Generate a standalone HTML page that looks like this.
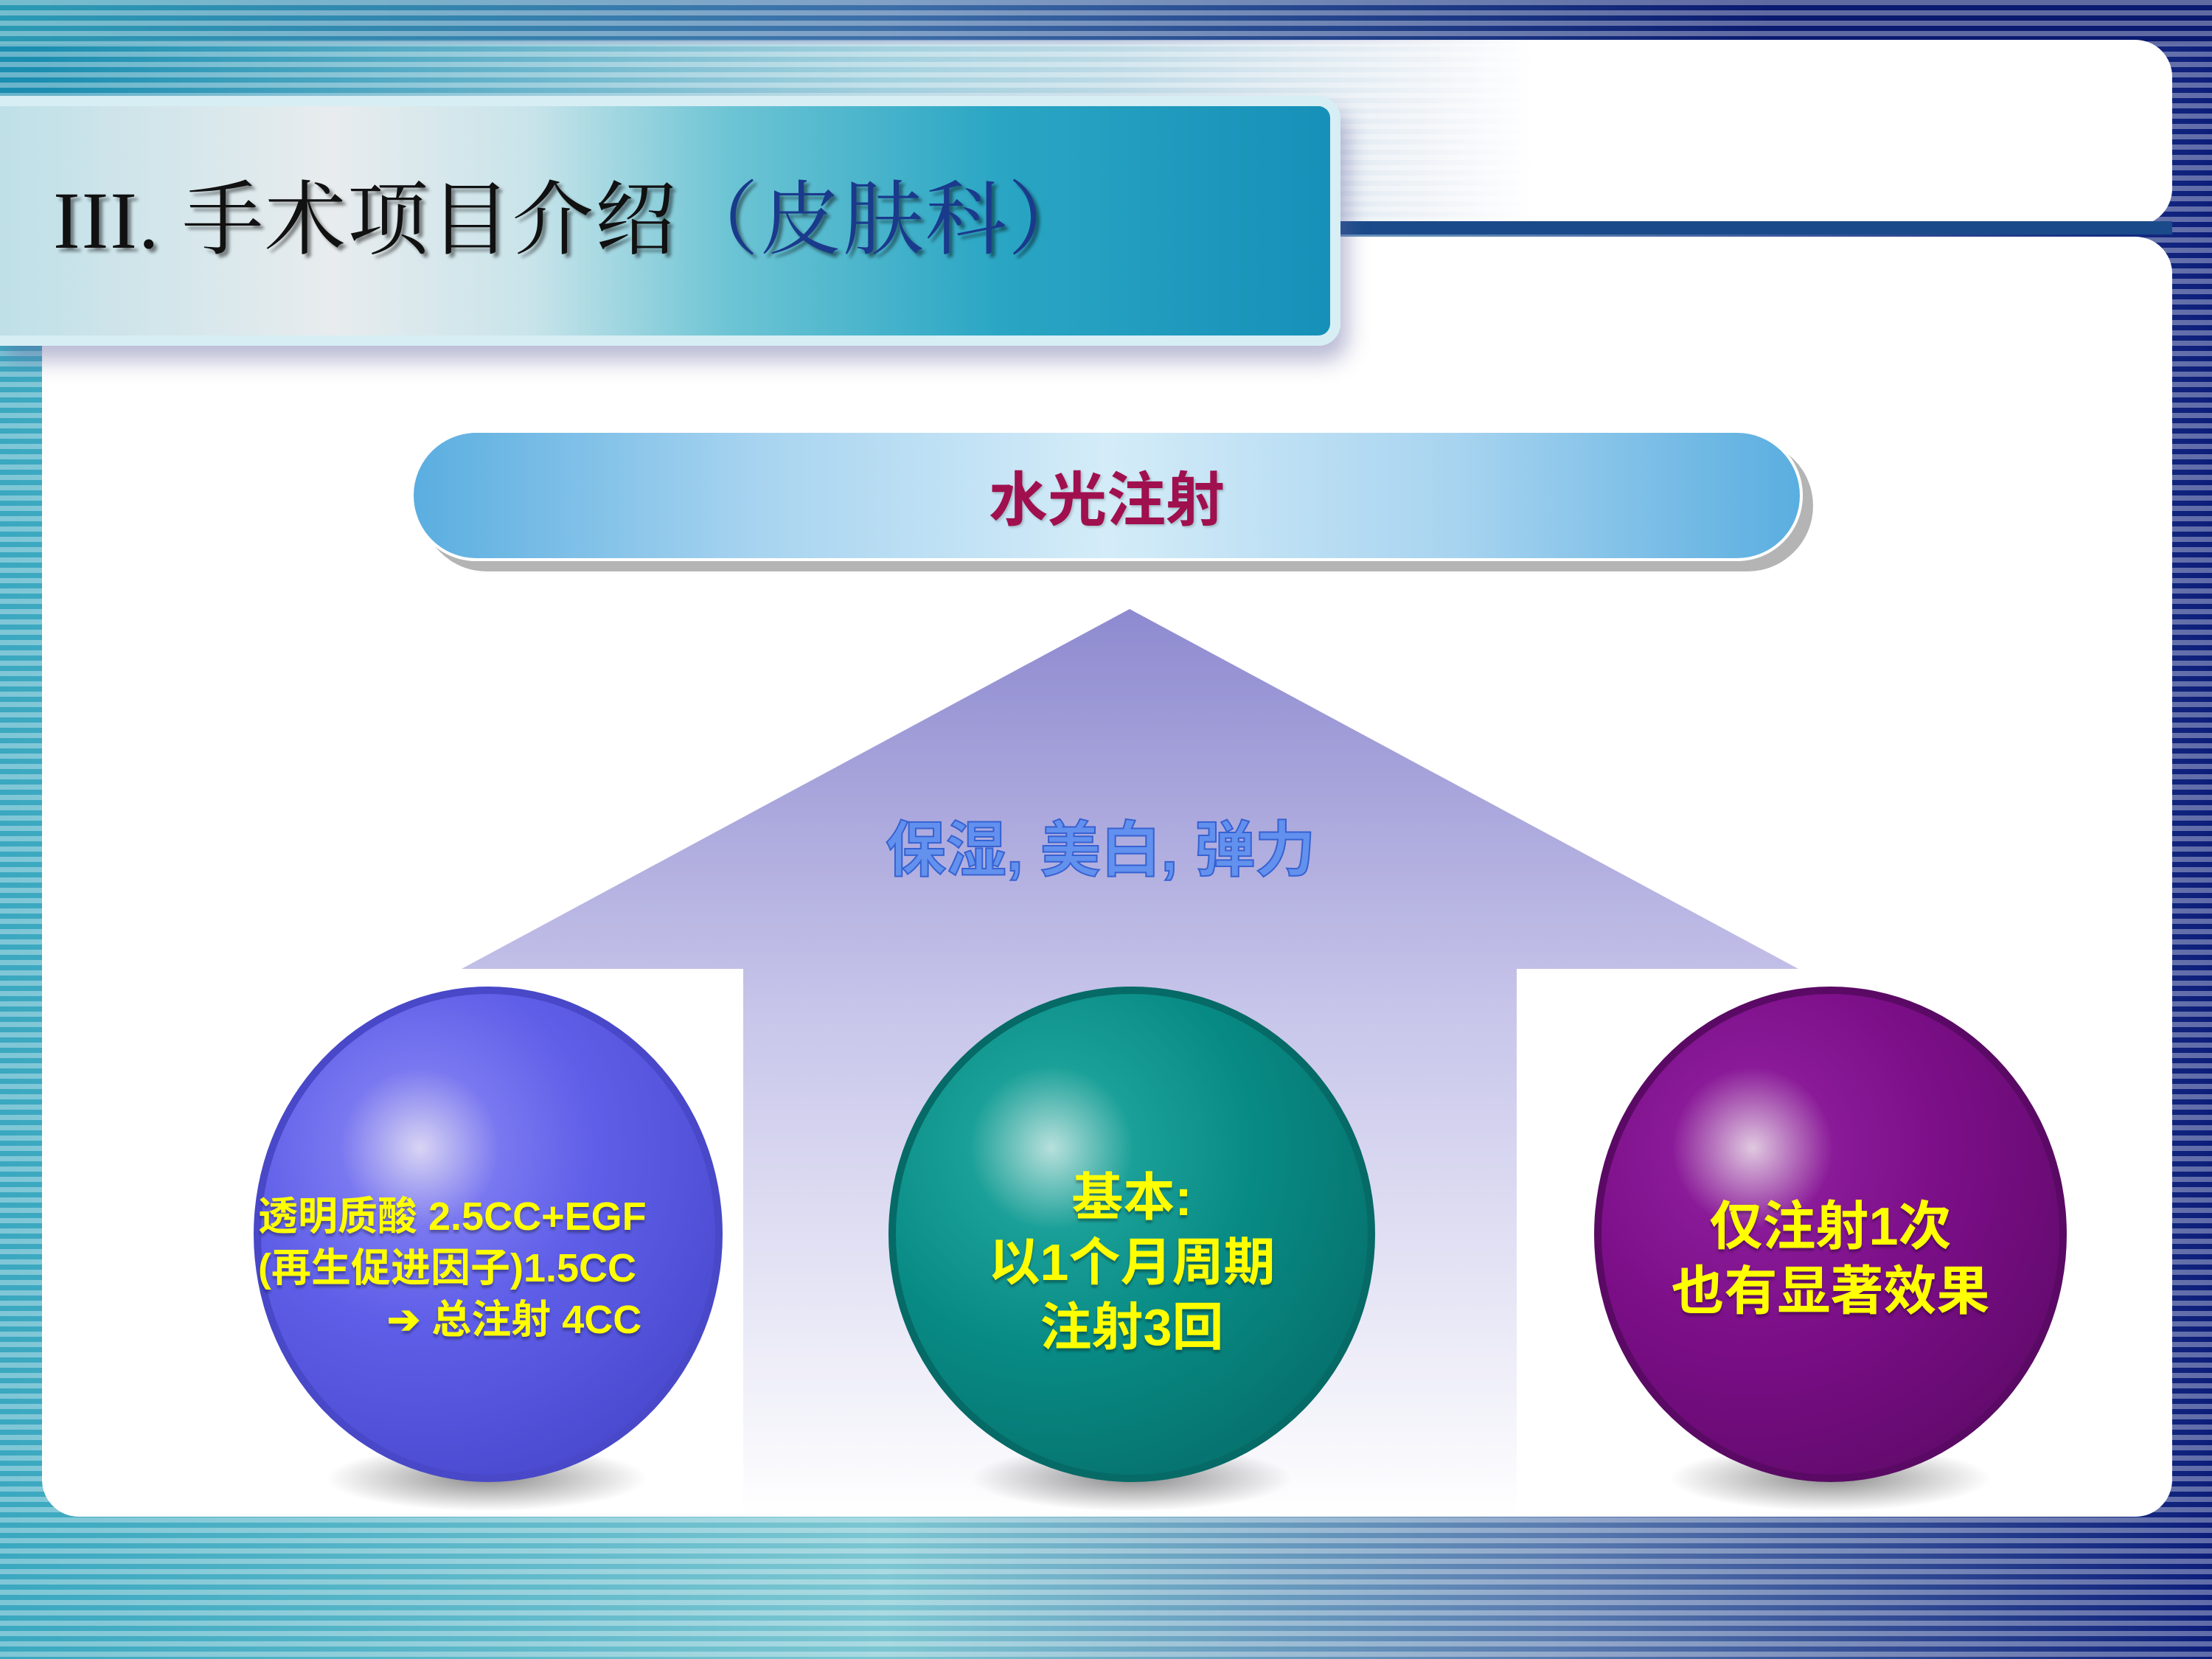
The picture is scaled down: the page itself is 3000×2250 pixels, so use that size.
<!DOCTYPE html>
<html><head><meta charset="utf-8"><style>
*{margin:0;padding:0;box-sizing:border-box}
body{width:3000px;height:2250px;overflow:hidden;position:relative;font-family:"Liberation Sans","Noto Sans CJK SC",sans-serif;
background:linear-gradient(90deg,#3aa8c0 0%,#7cc6d2 40%,#5a7cb0 70%,#0c1e7a 100%);}
.stripes{position:absolute;left:0;top:0;width:3000px;height:2250px;background:repeating-linear-gradient(180deg,rgba(255,255,255,.35) 0 7px,rgba(0,0,0,0) 7px 14px);}
.topfade{position:absolute;left:0;top:0;width:3000px;height:60px;background:linear-gradient(90deg,#2a9ab4,#3d6ea8 40%,#0a1a70 80%,#0a1a70)}
.topband{position:absolute;left:0;top:60px;width:2100px;height:70px;background:linear-gradient(90deg,#1a8eb0,rgba(40,140,180,.5) 60%,rgba(255,255,255,0))}
.panel1{position:absolute;left:57px;top:54px;width:2889px;height:252px;border-radius:0 50px 50px 0;background:linear-gradient(90deg,rgba(255,255,255,0) 0%,rgba(255,255,255,.6) 50%,#fff 70%)}
.bar{position:absolute;left:1818px;top:300px;width:1128px;height:18px;background:#1a4a8a}
.panel2{position:absolute;left:57px;top:321px;width:2889px;height:1736px;border-radius:0 50px 50px 50px;background:#fff}
.header{position:absolute;left:0;top:130px;width:1818px;height:339px;border-radius:0 30px 30px 0;
background:linear-gradient(90deg,#bfe0e8 0%,#e8ecee 25%,#c8e4ea 40%,#6cc4d4 55%,#2aa6c4 75%,#1690b8 100%);
box-shadow:10px 20px 30px rgba(100,100,160,.45);border:14px solid #d6eef4;border-left:none}
.title{position:absolute;left:72px;top:210px;font-family:"Liberation Serif","Noto Serif CJK SC",serif;font-size:110px;color:#111;text-shadow:5px 5px 4px rgba(0,0,0,.45);white-space:nowrap;letter-spacing:2px}
.title span{color:#1a3a8c}
.pill{position:absolute;left:557px;top:583px;width:1888px;height:178px;border-radius:89px;
background:linear-gradient(90deg,#5aaee0 0%,#a8d4f0 25%,#d4ecf8 50%,#a8d4f0 75%,#5aaee0 100%);
box-shadow:14px 14px 0 #b4b4b4;border:4px solid #fff}
.pilltxt{position:absolute;left:557px;top:614px;width:1888px;text-align:center;font-size:80px;font-weight:bold;color:#a0104e;text-shadow:2px 2px 3px rgba(0,0,0,.2)}
.mid{position:absolute;left:1201px;top:1086px;font-size:82px;font-weight:bold;color:#5a8ef0;-webkit-text-stroke:2px #2a5ad0;opacity:.9;white-space:nowrap}
.ball{position:absolute;border-radius:50%}
.bt{position:absolute;color:#ffff00;font-weight:bold;text-align:center;white-space:nowrap;text-shadow:0 4px 3px rgba(0,0,0,.3)}
.shadow{position:absolute;border-radius:50%;background:radial-gradient(ellipse,rgba(0,0,0,.45),rgba(0,0,0,0) 70%)}
</style></head><body>
<div class="topfade"></div>
<div class="topband"></div>
<div class="stripes"></div>
<div class="panel1"></div>
<div class="bar"></div>
<div class="panel2"></div>
<div class="header"></div>
<div class="title">III. 手术项目介绍<span>（皮肤科）</span></div>

<div class="pill"></div>
<div class="pilltxt">水光注射</div>

<svg style="position:absolute;left:0;top:0" width="3000" height="2250">
<defs><linearGradient id="ar" x1="0" y1="826" x2="0" y2="2057" gradientUnits="userSpaceOnUse">
<stop offset="0" stop-color="#8e8ad0"/><stop offset="0.45" stop-color="#c8c6ea"/><stop offset="1" stop-color="#ffffff"/></linearGradient></defs>
<polygon points="1532,826 2439,1314 2057,1314 2057,2057 1008,2057 1008,1314 626,1314" fill="url(#ar)"/>
</svg>
<div class="mid">保湿, 美白, 弹力</div>

<div class="shadow" style="left:440px;top:1960px;width:440px;height:90px"></div>
<div class="shadow" style="left:1315px;top:1960px;width:440px;height:90px"></div>
<div class="shadow" style="left:2262px;top:1960px;width:440px;height:90px"></div>

<div class="ball" style="left:344px;top:1338px;width:636px;height:672px;background:radial-gradient(circle at 35% 32%,#d8d4f4 0%,#7a78f0 18%,#5e5ee8 40%,#4a4ad0 80%,#3a3ab0 100%);border:10px solid #4848c8"></div>
<div class="ball" style="left:1205px;top:1338px;width:660px;height:672px;background:radial-gradient(circle at 33% 32%,#b8e0dc 0%,#1aa098 18%,#088a84 45%,#066e6a 85%,#045a58 100%);border:10px solid #066a66"></div>
<div class="ball" style="left:2162px;top:1338px;width:641px;height:672px;background:radial-gradient(circle at 33% 32%,#e0c8e0 0%,#8a1a98 18%,#7a0e86 45%,#600a6a 85%,#4a0852 100%);border:10px solid #5a0a64"></div>

<div class="bt" style="left:350px;top:1615px;font-size:54px;line-height:70px;text-align:left">透明质酸 2.5CC+EGF<br>(再生促进因子)1.5CC<br><span style="padding-left:175px">➔ 总注射 4CC</span></div>
<div class="bt" style="left:1205px;top:1580px;width:660px;font-size:70px;line-height:88px">基本:<br>以1个月周期<br>注射3回</div>
<div class="bt" style="left:2162px;top:1620px;width:641px;font-size:72px;line-height:88px">仅注射1次<br>也有显著效果</div>
</body></html>
